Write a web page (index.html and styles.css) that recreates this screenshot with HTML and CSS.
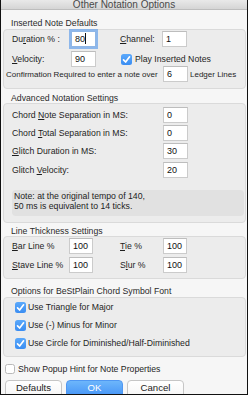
FILE: index.html
```html
<!DOCTYPE html>
<html>
<head>
<meta charset="utf-8">
<link rel="stylesheet" href="styles.css">
</head>
<body>
<div class="window">
  <div class="titlebar">Other Notation Options</div>

  <div class="section-label l1">Inserted Note Defaults</div>
  <div class="group g1">
    <div class="g1-grid">
      <span class="lbl">Du<u>r</u>ation % :</span>
      <span class="field focus">80<span class="caret"></span></span>
      <span></span>
      <span class="lbl"><u>C</u>hannel:</span>
      <span class="field">1</span>
      <span class="lbl"><u>V</u>elocity:</span>
      <span class="field">90</span>
      <span></span>
      <span class="check-row play"><span class="cb on"><svg viewBox="0 0 10 10"><path d="M2.3 5.3 L4.2 7.3 L7.8 2.6" fill="none" stroke="#fff" stroke-width="1.5" stroke-linecap="round" stroke-linejoin="round"/></svg></span>Play Inserted Notes</span>
    </div>
    <div class="confirm-row">
      <span class="confirm-lbl">Confirmation Required to enter a note over</span>
      <span class="field">6</span>
      <span class="ledger">Ledger Lines</span>
    </div>
  </div>

  <div class="section-label l2">Advanced Notation Settings</div>
  <div class="group g2">
    <div class="adv-row r1"><span class="adv-lbl">Chord <u>N</u>ote Separation in MS:</span><span class="field">0</span></div>
    <div class="adv-row r2"><span class="adv-lbl">Chord <u>T</u>otal Separation in MS:</span><span class="field">0</span></div>
    <div class="adv-row r3"><span class="adv-lbl"><u>G</u>litch Duration in MS:</span><span class="field">30</span></div>
    <div class="adv-row r4"><span class="adv-lbl">Glitch <u>V</u>elocity:</span><span class="field">20</span></div>
    <div class="note">Note: at the original tempo of 140,<br>50 ms is equivalent to 14 ticks.</div>
  </div>

  <div class="section-label l3">Line Thickness Settings</div>
  <div class="group g3">
    <div class="g3-grid">
      <span class="lbl"><u>B</u>ar Line %</span>
      <span class="field">100</span>
      <span></span>
      <span class="lbl"><u>T</u>ie %</span>
      <span class="field">100</span>
      <span class="lbl"><u>S</u>tave Line %</span>
      <span class="field">100</span>
      <span></span>
      <span class="lbl">S<u>l</u>ur %</span>
      <span class="field">100</span>
    </div>
  </div>

  <div class="section-label l4">Options for BeStPlain Chord Symbol Font</div>
  <div class="group g4">
    <div class="check-row opt"><span class="cb on"><svg viewBox="0 0 10 10"><path d="M2.3 5.3 L4.2 7.3 L7.8 2.6" fill="none" stroke="#fff" stroke-width="1.5" stroke-linecap="round" stroke-linejoin="round"/></svg></span>Use Triangle for Major</div>
    <div class="check-row opt"><span class="cb on"><svg viewBox="0 0 10 10"><path d="M2.3 5.3 L4.2 7.3 L7.8 2.6" fill="none" stroke="#fff" stroke-width="1.5" stroke-linecap="round" stroke-linejoin="round"/></svg></span>Use (-) Minus for Minor</div>
    <div class="check-row opt"><span class="cb on"><svg viewBox="0 0 10 10"><path d="M2.3 5.3 L4.2 7.3 L7.8 2.6" fill="none" stroke="#fff" stroke-width="1.5" stroke-linecap="round" stroke-linejoin="round"/></svg></span>Use Circle for Diminished/Half-Diminished</div>
  </div>

  <div class="check-row popup"><span class="cb off"></span>Show Popup Hint for Note Properties</div>

  <div class="buttons">
    <span class="btn">Defaults</span>
    <span class="btn primary">OK</span>
    <span class="btn">Cancel</span>
  </div>
</div>
</body>
</html>
```

FILE: styles.css
```css
* { box-sizing: border-box; }
html, body { margin: 0; padding: 0; }
body { width: 248px; height: 395px; overflow: hidden; background: #f6f6f6; }

.window {
  width: 248px;
  height: 395px;
  border: 1px solid #111;
  border-top: 0;
  background: #f6f6f6;
  overflow: hidden;
  font-family: "Liberation Sans", Arial, sans-serif;
  font-size: 8.7px;
  color: #1e1e1e;
  display: flex;
  flex-direction: column;
}

u { text-decoration-thickness: 1px; text-underline-offset: 1px; }

.titlebar {
  flex: none;
  height: 10px;
  background: linear-gradient(#e9e9e9, #d5d5d5);
  border-bottom: 1px solid #bdbdbd;
  text-align: center;
  font-size: 10px;
  line-height: 9px;
  color: #4a4a4a;
}

.section-label {
  flex: none;
  height: 10px;
  line-height: 10px;
  margin-left: 10px;
  color: #2a2a2a;
  white-space: nowrap;
}
.l1 { margin-top: 8px; }
.l2 { margin-top: 4px; }
.l3 { margin-top: 3px; }
.l4 { margin-top: 7px; }

.group {
  flex: none;
  margin-left: 2px;
  width: 243px;
  background: #ececec;
  border: 1px solid #dadada;
  border-radius: 4px;
  padding-left: 8px;
  padding-right: 1px;
}
.g1 { margin-top: 1px; height: 60px; padding-top: 1px; }
.g2 { height: 120px; padding-top: 3px; }
.g3 { height: 43px; padding-top: 1px; }
.g4 { margin-top: 1px; height: 60px; padding-top: 3px; }

.lbl { line-height: 16px; white-space: nowrap; }

.field {
  display: block;
  position: relative;
  width: 25px;
  height: 16px;
  background: #fff;
  border: 1px solid #cbcbcb;
  border-top-color: #bdbdbd;
  font-size: 9px;
  line-height: 15px;
  padding-left: 3px;
  color: #111;
}
.field.focus {
  box-shadow: 0 0 0 2px rgba(110, 165, 235, 0.75);
  border-color: #8fb6e6;
}
.caret {
  display: inline-block;
  width: 1px;
  height: 11px;
  background: #111;
  vertical-align: -2px;
}

.g1-grid {
  display: grid;
  grid-template-columns: 59px 25px 24px 42px 25px;
  grid-template-rows: 16px 16px;
  row-gap: 4px;
  align-items: center;
}
.check-row {
  display: flex;
  align-items: center;
  gap: 3px;
  white-space: nowrap;
}
.play { grid-column: 4 / 6; padding-left: 1px; }

.confirm-row {
  display: flex;
  align-items: center;
  margin-left: -6px;
  margin-top: -1px;
  height: 16px;
  font-size: 8px;
}
.confirm-lbl { width: 157px; white-space: nowrap; }
.ledger { margin-left: 2px; white-space: nowrap; }

.adv-row {
  display: flex;
  align-items: center;
  height: 16px;
}
.adv-lbl { width: 151px; white-space: nowrap; }
.adv-row + .adv-row { margin-top: 2px; }
.adv-row.r4 { margin-top: 3px; }

.note {
  margin-top: 12px;
  height: 26px;
  background: #e1e1e1;
  border-radius: 4px;
  padding: 1px 0 0 2px;
  line-height: 10px;
  color: #222;
}

.g3-grid {
  display: grid;
  grid-template-columns: 57px 24px 27px 43px 24px;
  grid-template-rows: 16px 16px;
  row-gap: 3px;
  align-items: center;
}
.g3-grid .field { width: 24px; }

.cb {
  flex: none;
  width: 11px;
  height: 11px;
  border-radius: 2.5px;
  display: inline-flex;
}
.cb svg { width: 11px; height: 11px; display: block; }
.cb.on { background: linear-gradient(#5ba9fb, #3a8df2); }
.cb.off { width: 10px; height: 10px; background: #fff; border: 1px solid #b9b9b9; }

.opt { height: 12px; padding-left: 3px; gap: 2px; }
.opt + .opt { margin-top: 6px; }

.popup {
  flex: none;
  height: 12px;
  margin-top: 6px;
  margin-left: 4px;
  gap: 3px;
}

.buttons {
  flex: none;
  display: flex;
  gap: 4px;
  margin-top: 5px;
  margin-left: 4px;
}
.btn {
  width: 57px;
  height: 20px;
  border: 1px solid #c6c6c6;
  border-radius: 4px;
  background: linear-gradient(#ffffff, #f4f4f4);
  text-align: center;
  font-size: 9.6px;
  line-height: 13px;
  color: #222;
}
.btn.primary {
  border-color: #4f97f2;
  background: linear-gradient(#6db6fb, #3e8ef6);
  color: #fff;
}
```
